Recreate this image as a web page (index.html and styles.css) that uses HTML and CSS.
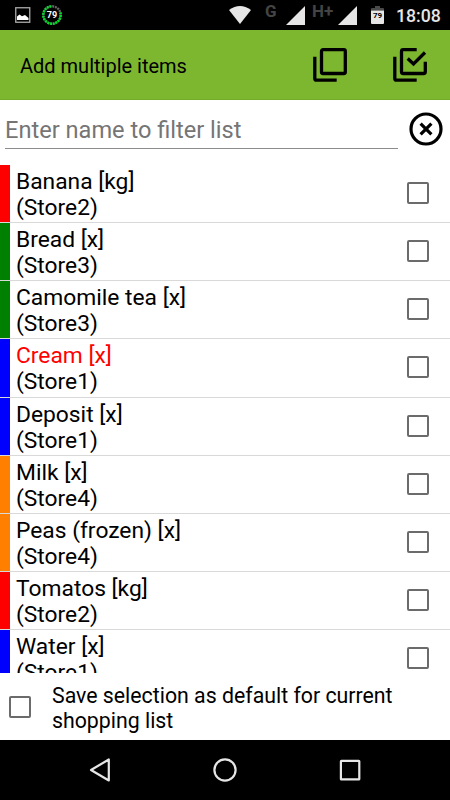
FILE: index.html
```
<!DOCTYPE html>
<html lang="en">
<head>
    <meta charset="UTF-8">
    <meta name="viewport" content="width=device-width, initial-scale=1.0">
    <title>Add multiple items</title>
    <link rel="stylesheet" href="styles.css">
</head>
<body>
    <div class="status-bar">
        <svg class="picture" width="16" height="16" viewBox="0 0 16 16">
            <rect x="0.75" y="0.75" width="14" height="14.5" fill="none" stroke="#aaa" stroke-width="1.3"/>
            <path d="M2 13V9.5L4.5 7.5 7 9.3 10 8 13.5 11v2z" fill="#fff"/>
        </svg>
        <svg class="ring" width="22" height="22" viewBox="0 0 22 22">
            <circle cx="11" cy="11" r="8.7" fill="none" stroke="#666" stroke-width="2.4" stroke-dasharray="2 0.733"/>
            <circle cx="11" cy="11" r="8.7" fill="none" stroke="#00dc28" stroke-width="2.4" pathLength="100" stroke-dasharray="3.66 1.34 3.66 1.34 3.66 1.34 3.66 1.34 3.66 1.34 3.66 1.34 3.66 1.34 3.66 1.34 3.66 1.34 3.66 1.34 3.66 1.34 3.66 1.34 3.66 1.34 3.66 1.34 3.66 1.34 3.66 100" transform="rotate(-18 11 11)"/>
            <text x="11" y="14.2" text-anchor="middle" class="ring-text">79</text>
        </svg>
        <svg class="wifi" width="22" height="18" viewBox="0 0 22 18">
            <path d="M0 4Q11-4 22 4L11 18z" fill="#e6e6e6"/>
        </svg>
        <span class="net net-g">G</span>
        <svg class="signal" width="19" height="19" viewBox="0 0 19 19"><path d="M19 0v19H0z" fill="#e6e6e6"/></svg>
        <span class="net net-h">H+</span>
        <svg class="signal" width="19" height="19" viewBox="0 0 19 19"><path d="M19 0v19H0z" fill="#e6e6e6"/></svg>
        <svg class="battery" width="13" height="18" viewBox="0 0 13 18">
            <path d="M0 4.5V3q0-1 1-1h3V0h5v2h3q1 0 1 1v1.5z" fill="#4a4a4a"/>
            <path d="M0 4.5h13V17q0 1-1 1H1q-1 0-1-1z" fill="#e6e6e6"/>
            <text x="6.5" y="12" text-anchor="middle" class="battery-text">79</text>
        </svg>
        <span class="time">18:08</span>
    </div>

    <div class="app-bar">
        <h1>Add multiple items</h1>
        <svg class="action" width="40" height="40" viewBox="0 0 40 40">
            <rect x="11.5" y="4.7" width="23.8" height="23.8" rx="1.5"/>
            <path d="M4.8 11.7V33.5q0 1.7 1.7 1.7H26.7"/>
        </svg>
        <svg class="action" width="40" height="40" viewBox="0 0 40 40">
            <path d="M26.7 4.7H13.2q-1.7 0-1.7 1.7V26.8q0 1.7 1.7 1.7H33.6q1.7 0 1.7-1.7V16.7"/>
            <path d="M4.8 11.7V33.5q0 1.7 1.7 1.7H26.7"/>
            <path d="M17.7 13.5L23.5 19 35 7.5"/>
        </svg>
    </div>

    <div class="filter">
        <input type="text" placeholder="Enter name to filter list">
        <svg width="34" height="34" viewBox="0 0 34 34">
            <circle cx="17" cy="17" r="15"/>
            <path d="M11.6 11.6l10.8 10.8M22.4 11.6L11.6 22.4"/>
        </svg>
    </div>

    <ul class="items">
        <li class="red"><div>Banana [kg]<br>(Store2)</div><input type="checkbox"></li>
        <li class="green"><div>Bread [x]<br>(Store3)</div><input type="checkbox"></li>
        <li class="green"><div>Camomile tea [x]<br>(Store3)</div><input type="checkbox"></li>
        <li class="blue"><div><span class="marked">Cream [x]</span><br>(Store1)</div><input type="checkbox"></li>
        <li class="blue"><div>Deposit [x]<br>(Store1)</div><input type="checkbox"></li>
        <li class="orange"><div>Milk [x]<br>(Store4)</div><input type="checkbox"></li>
        <li class="orange"><div>Peas (frozen) [x]<br>(Store4)</div><input type="checkbox"></li>
        <li class="red"><div>Tomatos [kg]<br>(Store2)</div><input type="checkbox"></li>
        <li class="blue"><div>Water [x]<br>(Store1)</div><input type="checkbox"></li>
    </ul>

    <label class="save">
        <input type="checkbox">
        <span>Save selection as default for current<br>shopping list</span>
    </label>

    <div class="nav-bar">
        <svg width="24" height="26" viewBox="0 0 24 26"><path d="M20.8 2.5v21L3 13z"/></svg>
        <svg width="24" height="26" viewBox="0 0 24 26"><circle cx="12" cy="13" r="10.6"/></svg>
        <svg width="24" height="26" viewBox="0 0 24 26"><rect x="2.9" y="3.8" width="18.4" height="18.6" rx="0.5"/></svg>
    </div>
</body>
</html>
```
FILE: styles.css
```
body {
    font-family: Roboto, sans-serif;
    margin: 0;
    height: 800px;
    display: flex;
    flex-direction: column;
    overflow: hidden;
    background: #fff;
    color: #000;
}
.status-bar {
    display: flex;
    align-items: flex-start;
    height: 30px;
    flex: none;
    background: #000;
    color: #e6e6e6;
}
.picture {
    margin: 7px 0 0 15px;
}
.ring {
    margin: 4px 0 0 10px;
}
.ring-text {
    font-size: 9px;
    font-weight: bold;
    fill: #fff;
}
.wifi {
    margin: 6px 0 0 auto;
}
.net {
    font-size: 17px;
    line-height: 20px;
    font-weight: bold;
    color: #444;
    margin-top: 1px;
}
.net-g {
    width: 21px;
    margin-left: 14px;
}
.net-h {
    width: 26px;
    margin-left: 7px;
}
.signal {
    margin-top: 6px;
}
.battery {
    margin: 6px 12px 0 14px;
}
.battery-text {
    font-size: 8px;
    font-weight: bold;
    fill: #000;
}
.time {
    width: 54px;
    font-size: 17.7px;
    font-weight: 500;
    line-height: 32px;
}
.app-bar {
    display: flex;
    align-items: center;
    gap: 40px;
    height: 70px;
    flex: none;
    padding: 0 20px;
    box-sizing: border-box;
    background: #7db72f;
    border-bottom: 1px solid #74ab2b;
}
h1 {
    flex: 1;
    margin: 0;
    padding-top: 2px;
    font-size: 20px;
    font-weight: normal;
}
.action {
    fill: none;
    stroke: #000;
    stroke-width: 3.3;
}
.filter {
    display: flex;
    height: 65px;
    flex: none;
}
.filter input {
    width: 393px;
    height: 34px;
    box-sizing: border-box;
    margin: 15px 11px 0 5px;
    padding: 0 0 3px;
    border: none;
    border-bottom: 1px solid #8c8c8c;
    font: 23.6px Roboto, sans-serif;
    outline: none;
}
.filter input::placeholder {
    color: #757575;
}
.filter svg {
    margin-top: 12px;
    fill: none;
    stroke: #000;
    stroke-width: 3.2;
}
.items {
    flex: none;
    height: 508px;
    margin: 0;
    padding: 0;
    overflow: hidden;
    list-style: none;
    font-size: 22.8px;
    line-height: 26px;
}
.items li {
    display: flex;
    align-items: center;
    height: 58.15px;
    box-sizing: border-box;
    padding-right: 21.5px;
    border-bottom: 1px solid #d9d9d9;
}
.items li::before {
    content: "";
    align-self: stretch;
    width: 10px;
    margin-right: 6px;
}
.items div {
    flex: 1;
    padding-top: 3px;
}
.items .red::before {
    background: #f00;
}
.items .green::before {
    background: #008000;
}
.items .blue::before {
    background: #00f;
}
.items .orange::before {
    background: #ff8000;
}
.marked {
    color: #f00;
}
input[type="checkbox"] {
    appearance: none;
    flex: none;
    width: 22px;
    height: 22px;
    margin: 0;
    border: 2px solid #6b6b6b;
    border-radius: 2px;
}
.items input[type="checkbox"] {
    margin-bottom: 1px;
}
.save {
    display: flex;
    align-items: center;
    flex: 1;
    gap: 21px;
    padding-left: 9px;
    font-size: 21.3px;
    line-height: 25px;
}
.save span {
    padding-top: 2px;
}
.nav-bar {
    display: flex;
    align-items: center;
    justify-content: center;
    gap: 101px;
    height: 60px;
    flex: none;
    background: #000;
}
.nav-bar svg {
    fill: none;
    stroke: #e6e6e6;
    stroke-width: 2.2;
    stroke-linejoin: round;
}
```
